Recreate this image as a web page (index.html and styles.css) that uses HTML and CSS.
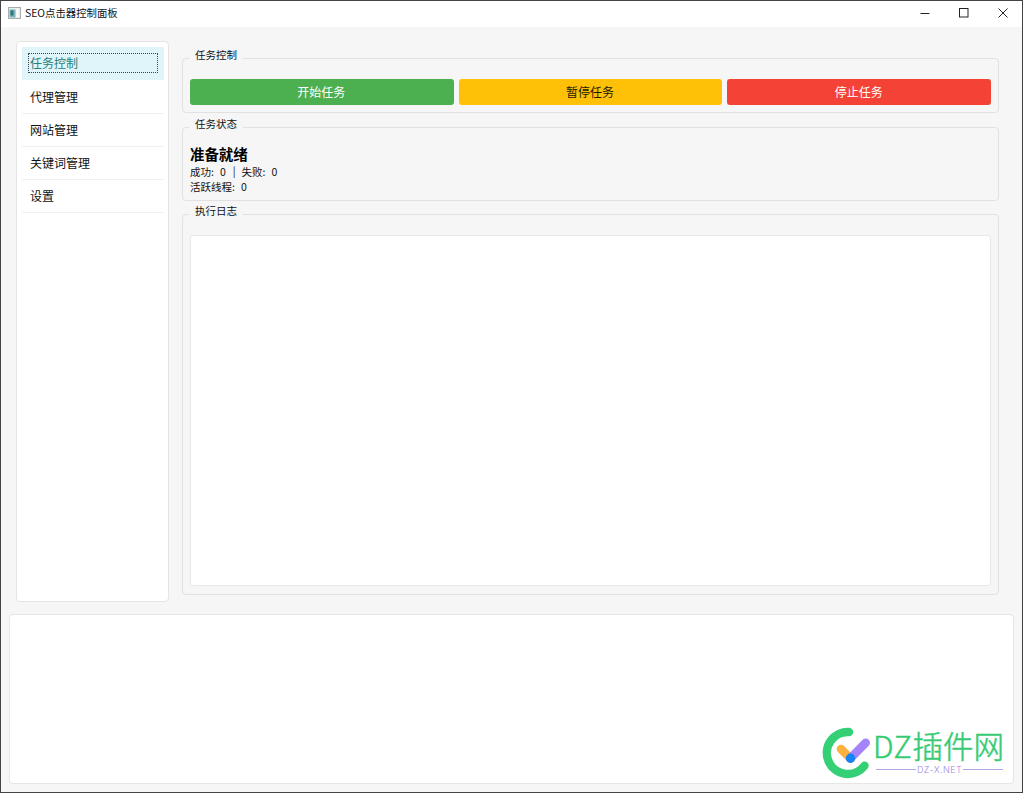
FILE: index.html
```html
<!DOCTYPE html>
<html lang="zh-CN">
<head>
    <meta charset="utf-8">
    <title>SEO点击器控制面板</title>
    <link rel="stylesheet" href="styles.css">
</head>
<body>
    <div class="window">
        <header class="titlebar">
            <svg class="app-icon" width="13" height="12" viewBox="0 0 13 12">
                <rect x="0.5" y="0.5" width="12" height="11" fill="#e9eeee" stroke="#a5adad"/>
                <rect x="1.5" y="2.5" width="6" height="8" fill="#7fb5b8"/>
                <rect x="2.5" y="3.5" width="3" height="5" fill="#2f7480"/>
                <path d="M9.5 2v8" stroke="#fff" stroke-width="2"/>
            </svg>
            <span class="title">SEO点击器控制面板</span>
            <div class="controls">
                <svg width="10" height="10" viewBox="0 0 10 10"><path d="M0.5 5.5h9"/></svg>
                <svg width="10" height="10" viewBox="0 0 10 10"><rect x="0.5" y="0.5" width="8.5" height="8.5"/></svg>
                <svg width="10" height="10" viewBox="0 0 10 10"><path d="M0.5 0.5l9 9M9.5 0.5l-9 9"/></svg>
            </div>
        </header>
        <main class="content">
            <nav class="sidebar">
                <div class="item active"><span>任务控制</span></div>
                <div class="item"><span>代理管理</span></div>
                <div class="item"><span>网站管理</span></div>
                <div class="item"><span>关键词管理</span></div>
                <div class="item"><span>设置</span></div>
            </nav>
            <section class="panel">
                <fieldset class="group control">
                    <legend>任务控制</legend>
                    <div class="buttons">
                        <button class="btn start">开始任务</button>
                        <button class="btn pause">暂停任务</button>
                        <button class="btn stop">停止任务</button>
                    </div>
                </fieldset>
                <fieldset class="group status">
                    <legend>任务状态</legend>
                    <div class="state">准备就绪</div>
                    <div class="line"><span class="key">成功:</span><span class="num">0</span><span class="sep">|</span><span class="key">失败:</span><span class="num">0</span></div>
                    <div class="line"><span class="key">活跃线程:</span><span class="num">0</span></div>
                </fieldset>
                <fieldset class="group log">
                    <legend>执行日志</legend>
                    <div class="log-view"></div>
                </fieldset>
            </section>
        </main>
        <footer class="output">
            <div class="brand">
                <svg width="50" height="52" viewBox="0 0 50 52" fill="none" stroke-linecap="round">
                    <path d="M27 5A21 21 0 1 0 42.5 38.7" stroke="#35d075" stroke-width="8.4"/>
                    <path d="M19 22l9.5 9.5" stroke="#fcb040" stroke-width="8.6"/>
                    <path d="M28.5 31.2L43.7 15.8" stroke="#a584fb" stroke-width="8.6"/>
                    <circle cx="28.5" cy="31.2" r="4.7" fill="#1683f7"/>
                </svg>
                <div class="brand-text">
                    <div class="brand-name"><span>DZ</span>插件网</div>
                    <div class="brand-url">DZ-X.NET</div>
                </div>
            </div>
        </footer>
    </div>
</body>
</html>
```
FILE: styles.css
```css
body {
    margin: 0;
    font-family: "Noto Sans CJK SC", sans-serif;
    font-size: 12px;
    color: #111;
}
.window {
    box-sizing: border-box;
    width: 1023px;
    height: 793px;
    border: 1px solid #444246;
    background: #f6f6f6;
    overflow: hidden;
}
.titlebar {
    display: flex;
    align-items: center;
    height: 26px;
    padding: 0 14px 0 7px;
    background: #fff;
}
.app-icon {
    margin-top: -2px;
}
.title {
    margin: -4px 0 0 4px;
    font-size: 10.4px;
}
.controls {
    display: flex;
    gap: 29px;
    margin: -3px 0 0 auto;
}
.controls svg {
    fill: none;
    stroke: #222;
}
.content {
    display: flex;
    gap: 13px;
    padding: 14px 23px 0 15px;
    height: 561px;
}
.sidebar {
    box-sizing: border-box;
    width: 153px;
    padding: 5px 4px 5px 5px;
    border: 1px solid #e4e4e4;
    border-radius: 4px;
    background: #fff;
}
.item {
    box-sizing: border-box;
    height: 33px;
    padding: 6px;
    border-bottom: 1px solid #f0f0f0;
    line-height: 20px;
}
.item span {
    display: block;
    padding: 0 2px;
}
.item.active {
    margin-bottom: 1px;
    padding: 5px;
    border-bottom: 0;
    background: #e0f5f9;
    color: #26807c;
}
.item.active span {
    margin: 1px 1px 0;
    padding: 0 1px;
    border: 1px dotted #345;
    line-height: 18px;
}
.panel {
    flex: 1;
    padding-top: 11px;
}
.group {
    box-sizing: border-box;
    margin: 0 0 8px;
    padding: 14px 7px 7px;
    border: 1px solid #e1e1e1;
    border-radius: 4px;
}
.group legend {
    height: 13px;
    margin-left: -1px;
    padding: 0 6px;
    font-size: 10.5px;
    line-height: 6px;
}
.control {
    height: 61px;
}
.status {
    height: 80px;
    margin-bottom: 7px;
    padding-top: 12px;
}
.log {
    height: 387px;
    margin: 0;
}
.buttons {
    display: flex;
    gap: 5px;
}
.btn {
    flex: 1;
    height: 26px;
    padding: 0 1px 2px 0;
    border: 0;
    border-radius: 3px;
    font: 12px "Noto Sans CJK SC", sans-serif;
    color: #fff;
}
.start {
    background: #4caf50;
}
.pause {
    background: #ffc107;
    color: #221a00;
}
.stop {
    background: #f44336;
}
.state {
    font-size: 14.4px;
    font-weight: bold;
    line-height: 16px;
    height: 19px;
    color: #000;
}
.line {
    display: flex;
    height: 15px;
    font-size: 10.5px;
    line-height: 14px;
}
.num {
    margin-left: 6px;
}
.sep {
    margin: -1px 6px 0 7px;
}
.log-view {
    box-sizing: border-box;
    height: 351px;
    border: 1px solid #e8e8e8;
    border-radius: 3px;
    background: #fff;
}
.output {
    display: flex;
    justify-content: flex-end;
    align-items: flex-end;
    box-sizing: border-box;
    height: 170px;
    margin: 12px 8px 0;
    padding: 0 9px 4px 0;
    border: 1px solid #e5e5e5;
    border-radius: 4px;
    background: #fff;
}
.brand {
    display: flex;
    width: 182px;
    height: 52px;
}
.brand-text {
    width: 131px;
    margin-left: 1px;
}
.brand-name {
    height: 38px;
    font-size: 30.5px;
    font-weight: 300;
    line-height: 36px;
    white-space: nowrap;
    color: #35cb72;
    -webkit-text-stroke: 0.5px #35cb72;
}
.brand-name span {
    letter-spacing: 0.8px;
}
.brand-url {
    display: flex;
    align-items: center;
    gap: 1px;
    height: 9px;
    margin: 0 1px 0 3px;
    font-family: Inter, sans-serif;
    font-size: 9px;
    font-weight: 300;
    letter-spacing: 0.4px;
    color: #9d88de;
}
.brand-url::before,
.brand-url::after {
    content: "";
    flex: 1;
    height: 1px;
    background: #b5a5e0;
}
```
